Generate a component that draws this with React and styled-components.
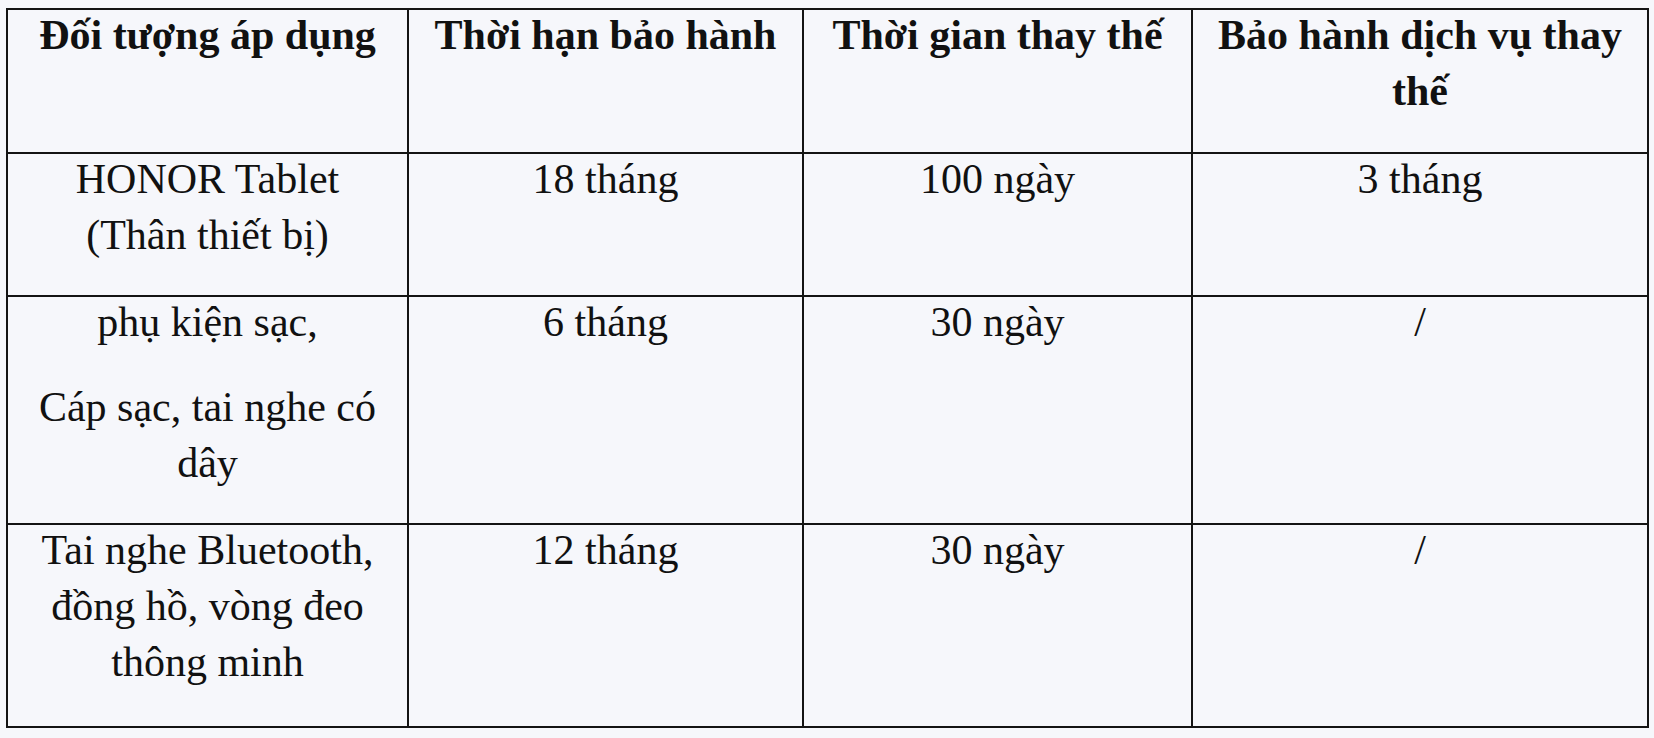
import styled, { createGlobalStyle } from "styled-components";

const GlobalStyle = createGlobalStyle`
  html, body {
    margin: 0;
    padding: 0;
    background: #f6f7fb;
  }
  body {
    font-family: "Liberation Serif", "Times New Roman", serif;
    color: #111;
  }
`;

const Page = styled.div`
  padding: 8px 0 0 6px;
`;

const Table = styled.table`
  width: 1641px;
  table-layout: fixed;
  border-collapse: collapse;
  border: 2px solid #141414;
`;

const Row = styled.tr`
  height: ${(p) => p.$h}px;
`;

const Cell = styled.td`
  border: 2px solid #141414;
  padding: 0 7px;
  vertical-align: top;
  text-align: center;
  white-space: nowrap;
  font-size: 42px;
  line-height: 56px;
  font-weight: ${(p) => (p.$head ? 700 : 400)};
`;

const Lines = styled.div`
  margin-top: -3px;
`;

const Para = styled.p`
  margin: 0 0 ${(p) => p.$after || 0}px;
`;

const Line = styled.span`
  display: block;
`;

const cols = [401, 395, 389, 456];

// each cell: list of paragraphs, each paragraph: list of lines
const rows = [
  {
    h: 144,
    head: true,
    cells: [
      [["Đối tượng áp dụng"]],
      [["Thời hạn bảo hành"]],
      [["Thời gian thay thế"]],
      [["Bảo hành dịch vụ thay", "thế"]],
    ],
  },
  {
    h: 143,
    cells: [[["HONOR Tablet", "(Thân thiết bị)"]], [["18 tháng"]], [["100 ngày"]], [["3 tháng"]]],
  },
  {
    h: 228,
    cells: [[["phụ kiện sạc,"], ["Cáp sạc, tai nghe có", "dây"]], [["6 tháng"]], [["30 ngày"]], [["/"]]],
  },
  {
    h: 203,
    cells: [
      [["Tai nghe Bluetooth,", "đồng hồ, vòng đeo", "thông minh"]],
      [["12 tháng"]],
      [["30 ngày"]],
      [["/"]],
    ],
  },
];

function App() {
  return (
    <>
      <GlobalStyle />
      <Page>
        <Table>
          <colgroup>
            {cols.map((w, i) => (
              <col key={i} style={{ width: w }} />
            ))}
          </colgroup>
          <tbody>
            {rows.map((r, ri) => (
              <Row key={ri} $h={r.h}>
                {r.cells.map((paras, ci) => (
                  <Cell key={ci} $head={r.head}>
                    <Lines>
                      {paras.map((lines, pi) => (
                        <Para key={pi} $after={pi < paras.length - 1 ? 29 : 0}>
                          {lines.map((t, li) => (
                            <Line key={li}>{t}</Line>
                          ))}
                        </Para>
                      ))}
                    </Lines>
                  </Cell>
                ))}
              </Row>
            ))}
          </tbody>
        </Table>
      </Page>
    </>
  );
}

export default App;
